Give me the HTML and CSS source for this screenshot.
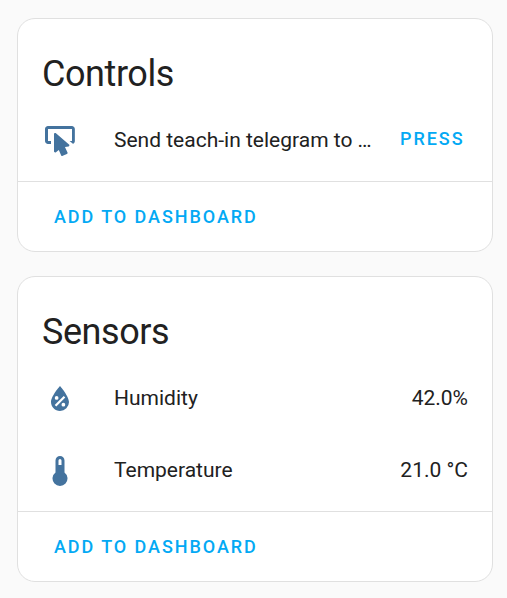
FILE: index.html
```html
<!DOCTYPE html>
<html lang="en">
<head>
<meta charset="utf-8">
<title>Device</title>
<link rel="stylesheet" href="styles.css">
</head>
<body>
<main class="column">
  <section class="card">
    <h1 class="card-header">Controls</h1>
    <div class="rows">
      <div class="row">
        <svg class="icon" viewBox="0 0 24 24"><path d="M18.1 15.3C18 15.4 17.8 15.5 17.7 15.6L15.3 16L17 19.6C17.2 20 17 20.4 16.6 20.6L13.8 21.9C13.7 22 13.6 22 13.5 22C13.2 22 12.9 21.8 12.8 21.6L11.2 18L9.3 19.5C9.2 19.6 9 19.7 8.8 19.7C8.4 19.7 8 19.4 8 18.9V7.5C8 7 8.3 6.7 8.8 6.7C9 6.7 9.2 6.8 9.3 6.9L18 14.3C18.3 14.5 18.4 15 18.1 15.3M6 12H4V4H20V12H18.4L20.6 13.9C21.4 13.6 21.9 12.9 21.9 12V4C21.9 2.9 21 2 19.9 2H4C2.9 2 2 2.9 2 4V12C2 13.1 2.9 14 4 14H6V12Z"/></svg>
        <span class="name">Send teach-in telegram to …</span>
        <button class="button press">PRESS</button>
      </div>
    </div>
    <footer class="actions"><button class="button">ADD TO DASHBOARD</button></footer>
  </section>
  <section class="card">
    <h1 class="card-header">Sensors</h1>
    <div class="rows">
      <div class="row">
        <svg class="icon" viewBox="0 0 24 24"><path d="M12,3.25C12,3.25 6,10 6,14C6,17.32 8.69,20 12,20A6,6 0 0,0 18,14C18,10 12,3.25 12,3.25M14.47,9.97L15.53,11.03L9.53,17.03L8.47,15.97M9.75,10A1.25,1.25 0 0,1 11,11.25A1.25,1.25 0 0,1 9.75,12.5A1.25,1.25 0 0,1 8.5,11.25A1.25,1.25 0 0,1 9.75,10M14.25,14.5A1.25,1.25 0 0,1 15.5,15.75A1.25,1.25 0 0,1 14.25,17A1.25,1.25 0 0,1 13,15.75A1.25,1.25 0 0,1 14.25,14.5Z"/></svg>
        <span class="name">Humidity</span>
        <span class="value">42.0%</span>
      </div>
      <div class="row">
        <svg class="icon" viewBox="0 0 24 24"><path d="M15 13V5A3 3 0 0 0 9 5V13A5 5 0 1 0 15 13M12 4A1 1 0 0 1 13 5V8H11V5A1 1 0 0 1 12 4Z"/></svg>
        <span class="name">Temperature</span>
        <span class="value">21.0 °C</span>
      </div>
    </div>
    <footer class="actions"><button class="button">ADD TO DASHBOARD</button></footer>
  </section>
</main>
</body>
</html>
```
FILE: styles.css
```css
* {
  box-sizing: border-box;
}

body {
  margin: 0;
  background: #fafafa;
  color: #212121;
  font-family: Roboto, "Liberation Sans", sans-serif;
  font-size: 21px;
  line-height: 30px;
}

.column {
  display: flex;
  flex-direction: column;
  gap: 24px;
  padding: 18px 14px 0 17px;
}

.card {
  background: #fff;
  border: 1px solid #e0e0e0;
  border-radius: 18px;
}

.card-header {
  margin: 0;
  padding: 19px 24px 0;
  font-size: 36px;
  font-weight: 400;
  line-height: 72px;
  letter-spacing: -0.432px;
}

.rows {
  display: flex;
  flex-direction: column;
  gap: 12px;
  padding: 0 24px 11px;
}

.row {
  display: flex;
  align-items: center;
  height: 60px;
}

.icon {
  flex: none;
  width: 36px;
  height: 36px;
  margin-top: 2px;
  fill: #44739e;
}

.name {
  flex: 1;
  margin-left: 36px;
  white-space: nowrap;
}

.actions {
  display: flex;
  align-items: center;
  height: 70px;
  padding: 0 24px;
  border-top: 1px solid #e0e0e0;
}

.button {
  border: 0;
  padding: 0 12px;
  background: none;
  color: #03a9f4;
  font: 500 18px/24px Roboto, "Liberation Sans", sans-serif;
  letter-spacing: 1.93px;
}

.press {
  margin-bottom: 2px;
  padding: 0 3.5px;
}
```
